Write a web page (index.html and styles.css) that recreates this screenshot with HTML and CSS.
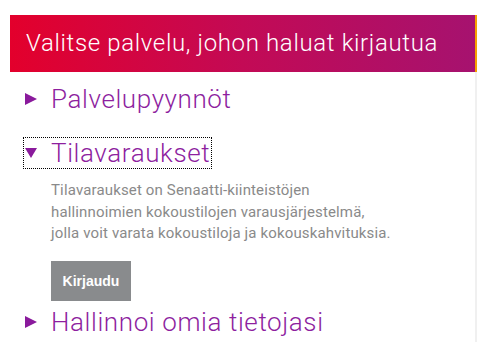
FILE: index.html
```html
<!DOCTYPE html>
<html lang="fi">
<head>
<meta charset="utf-8">
<title>Valitse palvelu</title>
<link rel="stylesheet" href="styles.css">
</head>
<body>
<div class="page">
  <header class="banner">
    <h1 class="banner-title">Valitse palvelu, johon haluat kirjautua</h1>
  </header>
  <main class="content">
    <section class="service">
      <div class="service-head">
        <svg class="marker" width="12" height="12" viewBox="0 0 12 12"><polygon points="0,0 12,6 0,12"/></svg>
        <span class="service-name">Palvelupyynnöt</span>
      </div>
    </section>
    <section class="service open">
      <div class="service-head focused">
        <svg class="marker" width="12" height="12" viewBox="0 0 12 12"><polygon points="0,1 12,1 6,11"/></svg>
        <span class="service-name">Tilavaraukset</span>
      </div>
      <div class="service-body">
        <p class="service-desc">Tilavaraukset on Senaatti-kiinteistöjen<br>hallinnoimien kokoustilojen varausjärjestelmä,<br>jolla voit varata kokoustiloja ja kokouskahvituksia.</p>
        <button class="login-btn" type="button">Kirjaudu</button>
      </div>
    </section>
    <section class="service last">
      <div class="service-head">
        <svg class="marker" width="12" height="12" viewBox="0 0 12 12"><polygon points="0,0 12,6 0,12"/></svg>
        <span class="service-name">Hallinnoi omia tietojasi</span>
      </div>
    </section>
  </main>
</div>
</body>
</html>
```

FILE: styles.css
```css
html, body {
  margin: 0;
  padding: 0;
  background: #ffffff;
  overflow: hidden;
}

body {
  font-family: Roboto, "Liberation Sans", sans-serif;
}

.page {
  padding: 15px 0 0 10px;
  width: 467px;
  height: 327px;
  display: flex;
  flex-direction: column;
  overflow: hidden;
}

.banner {
  flex: none;
  height: 57px;
  background: linear-gradient(90deg, #e3002c 0%, #c30a55 50%, #a6126f 100%);
  border-right: 2px solid #f5a000;
  display: flex;
  align-items: center;
  padding-left: 16px;
}

.banner-title {
  margin: 0;
  font-size: 24px;
  font-weight: 300;
  letter-spacing: 0.65px;
  color: #ffffff;
  line-height: 28px;
  position: relative;
  top: -1px;
}

.content {
  flex: none;
  min-height: 270px;
  border-right: 2px solid #f0f0f0;
  padding: 12px 0 0 14px;
}

.service {
  margin-bottom: 24px;
}

.service.open {
  margin-bottom: 6px;
}

.service-head {
  display: inline-flex;
  align-items: center;
  gap: 14px;
  height: 30px;
  padding: 0 1px;
  color: #8e1f9f;
}

.service-head.focused {
  outline: 1px dotted #000000;
}

.marker {
  fill: #8a1a9c;
  flex: none;
}

.service-name {
  font-size: 26px;
  font-weight: 300;
  letter-spacing: 0.6px;
  line-height: 30px;
}

.service-body {
  padding: 12px 0 0 27px;
}

.service-desc {
  margin: 0;
  font-size: 15px;
  letter-spacing: 0.15px;
  line-height: 21.5px;
  color: #8a8a8a;
}

.login-btn {
  margin-top: 16px;
  width: 80px;
  height: 40px;
  border: 0;
  border-radius: 0;
  background: #898b8d;
  color: #ffffff;
  font-family: "Liberation Sans", Arial, sans-serif;
  font-weight: bold;
  font-size: 14px;
  padding: 0;
  display: block;
}
```
